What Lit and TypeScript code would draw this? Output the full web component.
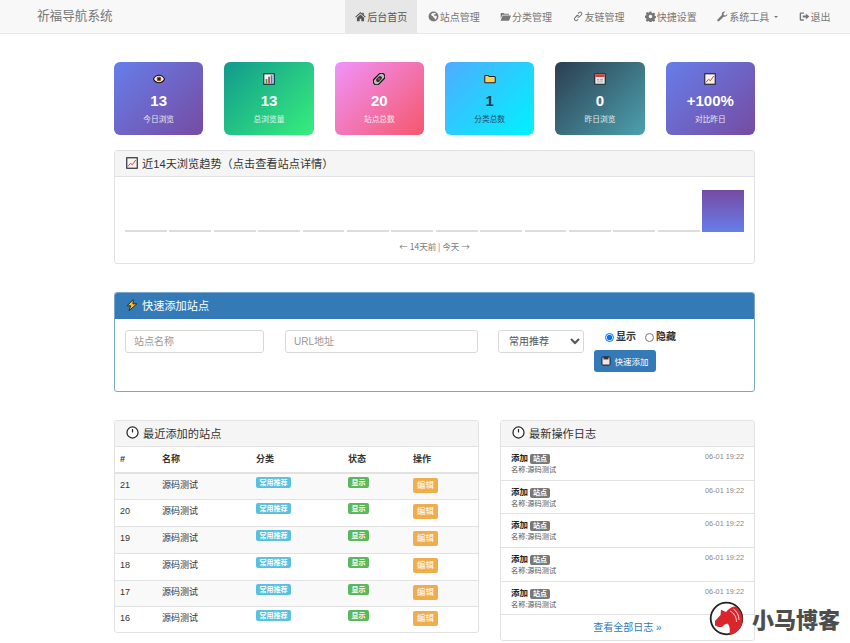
import { LitElement, html, css, svg } from "lit";
import { customElement } from "lit/decorators.js";

const navIcons: Record<string, unknown> = {
  home: svg`<path d="M8 1.500 0.300 8.400 1.400 9.500 8 3.700l6.600 5.800 1.100-1.100L12.800 5.800V2.500h-2v1.500zM2.800 9.800V15h4v-3.800h2.400V15h4V9.800L8 5.200z"/>`,
  globe: svg`<path d="M8 .8a7.200 7.200 0 1 0 0 14.400A7.200 7.200 0 0 0 8 .8zM6.600 2.800l1.800.4 1.600-.5 1.600 1-1 1.300-1.400-.2-.6 1.200 1 1 2.200-.2 1.200 1.400-.8 2.600-2 1.800-.8-2.400-1.600-1-.6-1.600-2.200-1-.5-1.400 1.200-1.500z"/>`,
  folder: svg`<path d="M1 4V2.800h4.400L6.600 4H13v1.600H3.600L1 11zM3.900 6.400H16L13.200 14H.8z"/>`,
  link: svg`<path d="M9.700 1.900a3 3 0 0 1 4.300 4.300l-2.500 2.500a3 3 0 0 1-3.900.3l1-1a1.600 1.600 0 0 0 1.900-.3l2.500-2.500a1.600 1.600 0 0 0-2.300-2.300L9.300 4.300 8.300 3.300zM6.300 6a3 3 0 0 1 3.900.6l-1 1a1.600 1.600 0 0 0-1.900.3L4.800 10.400a1.600 1.600 0 0 0 2.300 2.300l1.400-1.400 1 1-1.400 1.400A3 3 0 0 1 3.800 9.400z"/>`,
  cog: svg`<path fill-rule="evenodd" d="M6.600.8h2.800l.4 2 1.300.6 1.800-1.100 2 2-1.100 1.800.6 1.300 2 .4v2.400l-2 .4-.6 1.300 1.100 1.800-2 2-1.800-1.100-1.300.6-.4 2H6.600l-.4-2-1.300-.6-1.800 1.100-2-2 1.100-1.800-.6-1.300-2-.4V6.800l2-.4.6-1.300L1.100 3.300l2-2 1.800 1.100 1.300-.6zM8 5.400a2.600 2.600 0 1 0 0 5.200 2.600 2.600 0 0 0 0-5.200z"/>`,
  wrench: svg`<path d="M15 4.200l-2.600 2.400-2.400-.6-.6-2.400L11.800 1C9.600.4 7.200 1.800 7 4.200c0 .6 0 1.100.2 1.600L.8 12.200a1.700 1.700 0 0 0 2.400 2.400l6.400-6.400c2.800.8 6-1.500 5.400-4z"/>`,
  out: svg`<path d="M7 2v2H3v8h4v2H2.600A1.600 1.600 0 0 1 1 12.400V3.600A1.600 1.600 0 0 1 2.600 2zM10 3.800 15 8l-5 4.200V9.600H5.400V6.400H10z"/>`,
};

const navItems = [
  { icon: "home", label: "后台首页", active: true },
  { icon: "globe", label: "站点管理" },
  { icon: "folder", label: "分类管理" },
  { icon: "link", label: "友链管理" },
  { icon: "cog", label: "快捷设置" },
  { icon: "wrench", label: "系统工具", caret: true },
  { icon: "out", label: "退出" },
];

// small hand drawn emoji
const eye = svg`<path d="M.5 8c2-3.400 4.500-5 7.500-5s5.500 1.600 7.500 5c-2 3.400-4.500 5-7.500 5S2.500 11.400.5 8z" fill="#fff" stroke="#111" stroke-width="1.500"/><circle cx="8" cy="8" r="3.200" fill="#a4491a"/><circle cx="8" cy="8" r="1.400" fill="#111"/>`;
const bars = svg`<rect x="1" y="1" width="14" height="14" fill="#eef6f4" stroke="#123" stroke-width="1.500"/><rect x="3.500" y="8" width="2.300" height="6" fill="#3a9a4a"/><rect x="6.900" y="5" width="2.300" height="9" fill="#d33"/><rect x="10.300" y="3" width="2.300" height="11" fill="#3a7bd0"/>`;
const chain = svg`<g transform="rotate(-45 8 8)"><rect x="-1" y="3.500" width="18" height="9" rx="4.500" fill="#bbb" stroke="#111" stroke-width="1.500"/><rect x="3.500" y="5.500" width="9" height="5" rx="2.500" fill="#333"/><circle cx="8" cy="8" r="1.300" fill="#d44"/></g>`;
const folderIco = svg`<path d="M1 4.500A1.200 1.200 0 0 1 2.200 3.300h3.600l1.200 1.400h6.800A1.200 1.200 0 0 1 15 5.900v6a1.200 1.200 0 0 1-1.200 1.200H2.200A1.200 1.200 0 0 1 1 11.900z" fill="#fbcf5f" stroke="#222" stroke-width="1.400"/>`;
const calendar = svg`<rect x="1" y="1" width="14" height="14" rx="1" fill="#eee" stroke="#222" stroke-width="1.500"/><rect x="1.800" y="1.800" width="12.400" height="3.400" fill="#d9352a"/><rect x="4" y="8" width="3" height="2" fill="#aaa"/><rect x="8" y="8" width="4" height="2" fill="#aaa"/><rect x="4" y="11" width="8" height="1.500" fill="#bbb"/>`;
const trend = svg`<rect x="1" y="1" width="14" height="14" fill="#f8f3ee" stroke="#223" stroke-width="1.500"/><path d="M2.500 12.500 6 8.500l2.500 1.800L13 4" fill="none" stroke="#d2452f" stroke-width="1.300"/>`;
const clock = svg`<circle cx="8" cy="8" r="6.800" fill="#fff" stroke="#222" stroke-width="1.500"/><path d="M8 3.800V8" stroke="#222" stroke-width="1.500"/>`;
const bolt = svg`<path d="M9.500.8 1.500 9h4.700L4 15.500 14.500 6.500H9.300z" fill="#f7c12e" stroke="#222" stroke-width="1.200"/>`;
const floppy = svg`<rect x="1.500" y="1.500" width="13" height="13" rx="1.500" fill="#f3e4e8" stroke="#1b1b2a" stroke-width="1.600"/><rect x="4" y="1.500" width="8" height="4" fill="#333"/>`;

const stats = [
  { icon: eye, value: "13", label: "今日浏览", tone: "violet" },
  { icon: bars, value: "13", label: "总浏览量", tone: "green" },
  { icon: chain, value: "20", label: "站点总数", tone: "pink" },
  { icon: folderIco, value: "1", label: "分类总数", tone: "sky" },
  { icon: calendar, value: "0", label: "昨日浏览", tone: "slate" },
  { icon: trend, value: "+100%", label: "对比昨日", tone: "violet" },
];

const days = [0, 0, 0, 0, 0, 0, 0, 0, 0, 0, 0, 0, 0, 13];
const rows = [21, 20, 19, 18, 17, 16];
const logs = [1, 2, 3, 4, 5];

@customElement("app-root")
export class AppRoot extends LitElement {
  ico(body: unknown, size = 12) {
    return html`<svg class="ico" width=${size} height=${size} viewBox="0 0 16 16">${body}</svg>`;
  }

  render() {
    return html`
      <nav class="navbar">
        <span class="brand">祈福导航系统</span>
        <ul class="nav">
          ${navItems.map(
            (n) => html`<li class=${n.active ? "active" : ""}>
              <svg class="glyph" viewBox="0 0 16 16" fill="currentColor">${navIcons[n.icon]}</svg>
              <span>${n.label}</span>
              ${n.caret ? html`<i class="caret"></i>` : ""}
            </li>`
          )}
        </ul>
      </nav>
      <main>
        <section class="stats">
          ${stats.map(
            (s) => html`<div class="stat ${s.tone}">
              ${this.ico(s.icon)}
              <b>${s.value}</b>
              <small>${s.label}</small>
            </div>`
          )}
        </section>

        <section class="panel trend">
          <header>${this.ico(trend)}近14天浏览趋势（点击查看站点详情）</header>
          <div class="chart-body">
            <div class="chart">
              ${days.map(
                (d) => html`<div class=${d ? "bar on" : "bar"} style="height:${d ? 42 : 2}px"></div>`
              )}
            </div>
            <p class="caption">← 14天前 | 今天 →</p>
          </div>
        </section>

        <section class="panel quick">
          <header>${this.ico(bolt)}快速添加站点</header>
          <form class="quick-form">
            <input class="name" placeholder="站点名称" />
            <input class="url" placeholder="URL地址" />
            <select><option>常用推荐</option></select>
            <div class="side">
              <div class="radios">
                <label><input type="radio" name="vis" checked />显示</label>
                <label><input type="radio" name="vis" />隐藏</label>
              </div>
              <button type="button">${this.ico(floppy, 10)}快速添加</button>
            </div>
          </form>
        </section>

        <section class="bottom">
          <div class="panel recent">
            <header>${this.ico(clock, 13)}最近添加的站点</header>
            <table>
              <thead>
                <tr><th class="c1">#</th><th class="c2">名称</th><th class="c3">分类</th><th class="c4">状态</th><th>操作</th></tr>
              </thead>
              <tbody>
                ${rows.map(
                  (id) => html`<tr>
                    <td>${id}</td>
                    <td>源码测试</td>
                    <td><span class="tag info">常用推荐</span></td>
                    <td><span class="tag ok">显示</span></td>
                    <td><span class="edit">编辑</span></td>
                  </tr>`
                )}
              </tbody>
            </table>
          </div>
          <div class="panel logs">
            <header>${this.ico(clock, 13)}最新操作日志</header>
            ${logs.map(
              () => html`<div class="log">
                <div>
                  <div class="log-title"><b>添加</b><span class="tag grey">站点</span></div>
                  <div class="log-text">名称:源码测试</div>
                </div>
                <time>06-01 19:22</time>
              </div>`
            )}
            <a class="more">查看全部日志 »</a>
          </div>
        </section>
      </main>
      <div class="watermark">
        <svg width="35" height="35" viewBox="0 0 35 35">
          <circle cx="17.500" cy="17.500" r="15.800" fill="#fff" stroke="#222" stroke-width="1.800"/>
          <path d="M12 8.700 17 11C20 7 24 5 27 5.500 31 9 34 14 33.500 20 33 27 28 32.500 21 34 20 31 22 27 19 23 17 22 15 24 13 26L9.500 26 6 24.500V20l5.500-6z" fill="#d9262c"/>
          <path d="M21 10c4 2 6.500 6 6.500 11M24.500 8c3.500 2.500 5.500 6.500 5.500 11" fill="none" stroke="#fff" stroke-width=".8"/>
        </svg>
        <span>小马博客</span>
      </div>
    `;
  }

  static styles = css`
    :host {
      display: block;
      position: relative;
      height: 643px;
      overflow: hidden;
      background: #fff;
      color: #333;
      font-family: "Liberation Sans", "Noto Sans CJK SC", sans-serif;
      font-size: 10px;
    }
    * {
      box-sizing: border-box;
    }
    .ico {
      flex: none;
    }
    .navbar {
      height: 34px;
      display: flex;
      justify-content: space-between;
      background: #f8f8f8;
      border-bottom: 1px solid #e7e7e7;
      padding: 0 9.500px 0 37px;
    }
    .brand {
      font-size: 12.600px;
      line-height: 33px;
      color: #777;
    }
    .nav {
      display: flex;
      list-style: none;
      margin: 0;
      padding: 0;
      color: #777;
    }
    .nav li {
      display: flex;
      align-items: center;
      gap: 1px;
      height: 33px;
      padding: 0 9.900px 0 10.500px;
    }
    .nav li.active {
      background: #e7e7e7;
      color: #555;
    }
    .glyph {
      width: 11px;
      height: 11px;
    }
    .caret {
      width: 0;
      height: 0;
      margin-left: 4px;
      border: 2.500px solid transparent;
      border-top-color: #777;
      border-bottom: 0;
    }
    main {
      width: 641px;
      margin-left: 114px;
      padding-top: 28px;
    }
    .stats {
      display: grid;
      grid-template-columns: repeat(6, 1fr);
      gap: 21px;
      margin-bottom: 15px;
    }
    .stat {
      height: 73px;
      border-radius: 6px;
      color: #fff;
      display: flex;
      flex-direction: column;
      align-items: center;
      padding-top: 11px;
    }
    .stat b {
      font-size: 15px;
      line-height: 18px;
      margin-top: 7px;
    }
    .stat small {
      font-size: 7.700px;
      line-height: 11px;
      margin-top: 4px;
      opacity: 0.85;
    }
    .violet {
      background: linear-gradient(135deg, #667eea, #764ba2);
    }
    .green {
      background: linear-gradient(135deg, #11998e, #38ef7d);
    }
    .pink {
      background: linear-gradient(135deg, #f093fb, #f5576c);
    }
    .sky {
      background: linear-gradient(135deg, #4facfe, #00f2fe);
      color: #21374a;
    }
    .slate {
      background: linear-gradient(135deg, #2c3e50, #4ca1af);
    }
    .panel {
      border: 1px solid #e2e2e2;
      border-radius: 3px;
      overflow: hidden;
      background: #fff;
    }
    .panel header {
      height: 26px;
      display: flex;
      align-items: center;
      gap: 4px;
      padding: 0 11px 2px;
      background: #f5f5f5;
      border-bottom: 1px solid #e2e2e2;
      font-size: 11.200px;
    }
    .trend {
      height: 114px;
      margin-bottom: 28px;
    }
    .chart-body {
      padding: 13px 10px 0;
    }
    .chart {
      height: 42px;
      display: flex;
      align-items: flex-end;
      gap: 2.500px;
    }
    .bar {
      flex: 1;
      background: #ddd;
    }
    .bar.on {
      background: linear-gradient(180deg, #764ba2, #667eea);
    }
    .caption {
      margin: 8px 0 0;
      text-align: center;
      font-family: "Noto Sans CJK SC", sans-serif;
      font-size: 8.500px;
      line-height: 12px;
      color: #777;
    }
    .quick {
      height: 100px;
      margin-bottom: 28px;
      border-color: #7ba6cc;
    }
    .quick header {
      background: #337ab7;
      border-color: #337ab7;
      color: #fff;
    }
    .quick-form {
      display: flex;
      align-items: flex-start;
      padding: 11px 10px;
    }
    .quick-form input:not([type]),
    .quick-form select {
      height: 23px;
      border: 1px solid #d8d8d8;
      border-radius: 3px;
      background: #fff;
      font: inherit;
      color: #555;
      padding: 0 8px;
      outline: none;
    }
    .quick-form input::placeholder {
      color: #999;
    }
    .name {
      width: 139px;
      margin-right: 21px;
    }
    .url {
      width: 193px;
      margin-right: 20px;
    }
    .quick-form select {
      width: 86px;
      margin-right: 10px;
      padding: 0 4px 0 6px;
    }
    .side {
      display: flex;
      flex-direction: column;
      align-items: flex-start;
    }
    .radios {
      display: flex;
      gap: 9px;
      padding-left: 11px;
      height: 20px;
      align-items: flex-start;
      font-weight: 700;
      line-height: 14px;
    }
    .radios label {
      display: flex;
      align-items: center;
      gap: 2px;
    }
    .radios input {
      width: 9px;
      height: 9px;
      margin: 0;
    }
    button {
      width: 62px;
      height: 22px;
      display: flex;
      align-items: center;
      justify-content: center;
      gap: 3px;
      margin: 0;
      padding: 0 0 1px;
      border: 0;
      border-radius: 3px;
      background: #337ab7;
      color: #fff;
      font: inherit;
      font-size: 8.500px;
    }
    .bottom {
      display: grid;
      grid-template-columns: 365px 255px;
      gap: 21px;
      align-items: start;
    }
    .recent {
      height: 213px;
    }
    .logs {
      height: 221px;
    }
    table {
      width: 100%;
      border-collapse: collapse;
      font-size: 9px;
    }
    th {
      height: 26px;
      padding: 0 5px 2px;
      text-align: left;
      border-bottom: 2px solid #e2e2e2;
      font-size: 9px;
    }
    .c1 {
      width: 42px;
    }
    .c2 {
      width: 94px;
    }
    .c3 {
      width: 92px;
    }
    .c4 {
      width: 65px;
    }
    td {
      height: 26.800px;
      padding: 3px 5px 0;
      border-top: 1px solid #e2e2e2;
      vertical-align: top;
      line-height: 16px;
    }
    tbody tr:first-child td {
      border-top: 0;
    }
    tbody tr:nth-child(odd) {
      background: #f9f9f9;
    }
    .tag {
      display: inline-block;
      padding: 0 3.500px;
      border-radius: 2px;
      color: #fff;
      font-size: 7px;
      font-weight: 700;
      line-height: 11px;
      vertical-align: top;
    }
    .info {
      background: #5bc0de;
    }
    .ok {
      background: #5cb85c;
    }
    .grey {
      background: #777;
      margin-left: 2px;
      padding: 0 3px;
      line-height: 9px;
      margin-top: 1px;
    }
    .edit {
      display: inline-block;
      margin-top: 1px;
      padding: 0 4px;
      border-radius: 2px;
      background: #f0ad4e;
      color: #fff;
      font-size: 8.500px;
      line-height: 15px;
      vertical-align: top;
    }
    .log {
      height: 33.700px;
      padding: 6px 10px 0 10px;
      display: flex;
      justify-content: space-between;
      border-bottom: 1px solid #e2e2e2;
    }
    .log-title {
      display: flex;
      font-size: 8.500px;
      line-height: 11px;
      color: #222;
    }
    .log-text {
      font-size: 7.200px;
      line-height: 11px;
      color: #555;
    }
    time {
      margin-top: -2px;
      font-size: 7.300px;
      line-height: 11px;
      color: #888;
    }
    .more {
      display: block;
      text-align: center;
      line-height: 25px;
      color: #337ab7;
    }
    .watermark {
      position: absolute;
      left: 709px;
      top: 601px;
      display: flex;
      align-items: center;
      gap: 8px;
    }
    .watermark span {
      font-family: "Noto Sans CJK SC", sans-serif;
      font-size: 22px;
      font-weight: 900;
      color: #4d4d4d;
      line-height: 35px;
    }
  `;
}
